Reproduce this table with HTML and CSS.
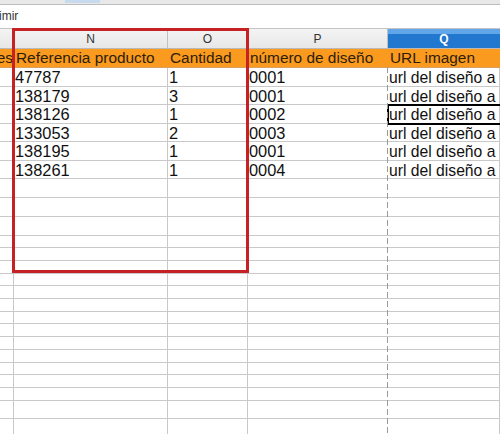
FILE: index.html
```html
<!DOCTYPE html>
<html lang="es">
<head>
<meta charset="utf-8">
<title>Hoja de cálculo</title>
<link rel="stylesheet" href="styles.css">
</head>
<body>
<div class="app">
  <div class="tabs"><span class="tab"></span></div>
  <div class="menubar"><span class="menu-item">imir</span></div>
  <div class="sheet">
    <div class="row hdr">
      <div class="c c0"></div><div class="c">N</div><div class="c">O</div><div class="c">P</div><div class="c sel">Q</div>
    </div>
    <div class="row h19 titles">
      <div class="c c0 tail">es</div><div class="c">Referencia producto</div><div class="c">Cantidad</div><div class="c">número de diseño</div><div class="c">URL imagen</div>
    </div>
    <div class="row h19 data"><div class="c c0"></div><div class="c num">47787</div><div class="c num">1</div><div class="c num pb">0001</div><div class="c url">url del diseño a</div></div>
    <div class="row h18 data"><div class="c c0"></div><div class="c num">138179</div><div class="c num">3</div><div class="c num pb">0001</div><div class="c url">url del diseño a</div></div>
    <div class="row h19 data"><div class="c c0"></div><div class="c num">138126</div><div class="c num">1</div><div class="c num pb">0002</div><div class="c url cursor">url del diseño a</div></div>
    <div class="row h18 data"><div class="c c0"></div><div class="c num">133053</div><div class="c num">2</div><div class="c num pb">0003</div><div class="c url">url del diseño a</div></div>
    <div class="row h19 data"><div class="c c0"></div><div class="c num">138195</div><div class="c num">1</div><div class="c num pb">0001</div><div class="c url">url del diseño a</div></div>
    <div class="row h18 data"><div class="c c0"></div><div class="c num">138261</div><div class="c num">1</div><div class="c num pb">0004</div><div class="c url">url del diseño a</div></div>
    <div class="row h19"><div class="c c0"></div><div class="c"></div><div class="c"></div><div class="c pb"></div><div class="c"></div></div>
    <div class="row h19"><div class="c c0"></div><div class="c"></div><div class="c"></div><div class="c pb"></div><div class="c"></div></div>
    <div class="row h19"><div class="c c0"></div><div class="c"></div><div class="c"></div><div class="c pb"></div><div class="c"></div></div>
    <div class="row h12"><div class="c c0"></div><div class="c"></div><div class="c"></div><div class="c pb"></div><div class="c"></div></div>
    <div class="row h13"><div class="c c0"></div><div class="c"></div><div class="c"></div><div class="c pb"></div><div class="c"></div></div>
    <div class="row h13"><div class="c c0"></div><div class="c"></div><div class="c"></div><div class="c pb"></div><div class="c"></div></div>
    <div class="row h12"><div class="c c0"></div><div class="c"></div><div class="c"></div><div class="c pb"></div><div class="c"></div></div>
    <div class="row h13"><div class="c c0"></div><div class="c"></div><div class="c"></div><div class="c pb"></div><div class="c"></div></div>
    <div class="row h13"><div class="c c0"></div><div class="c"></div><div class="c"></div><div class="c pb"></div><div class="c"></div></div>
    <div class="row h12"><div class="c c0"></div><div class="c"></div><div class="c"></div><div class="c pb"></div><div class="c"></div></div>
    <div class="row h13"><div class="c c0"></div><div class="c"></div><div class="c"></div><div class="c pb"></div><div class="c"></div></div>
    <div class="row h13"><div class="c c0"></div><div class="c"></div><div class="c"></div><div class="c pb"></div><div class="c"></div></div>
    <div class="row h13"><div class="c c0"></div><div class="c"></div><div class="c"></div><div class="c pb"></div><div class="c"></div></div>
    <div class="row h12"><div class="c c0"></div><div class="c"></div><div class="c"></div><div class="c pb"></div><div class="c"></div></div>
    <div class="row h13"><div class="c c0"></div><div class="c"></div><div class="c"></div><div class="c pb"></div><div class="c"></div></div>
    <div class="row h13"><div class="c c0"></div><div class="c"></div><div class="c"></div><div class="c pb"></div><div class="c"></div></div>
    <div class="row h18"><div class="c c0"></div><div class="c"></div><div class="c"></div><div class="c pb"></div><div class="c"></div></div>
    <div class="row h19"><div class="c c0"></div><div class="c"></div><div class="c"></div><div class="c pb"></div><div class="c"></div></div>
    <div class="pagebreak"></div>
    <div class="highlight"></div>
  </div>
</div>
</body>
</html>
```

FILE: styles.css
```css
html, body {
  margin: 0;
  padding: 0;
  background: #ffffff;
  overflow: hidden;
}

.app {
  width: 500px;
  height: 434px;
  overflow: hidden;
  font-family: "Liberation Sans", Arial, sans-serif;
  color: #111;
}

.tabs {
  height: 4px;
  background: #e8e8e8;
  border-bottom: 1px solid #bdbdbd;
  display: flex;
}

.tab {
  margin-left: 65px;
  width: 35px;
  height: 3px;
  background: #c7daee;
}

.menubar {
  height: 23px;
  display: flex;
  align-items: center;
  background: #ffffff;
}

.menu-item {
  font-size: 12px;
  color: #333;
  margin-left: -1px;
  padding-bottom: 1px;
}

.sheet {
  position: relative;
}

.row {
  display: grid;
  grid-template-columns: 14px 154px 80px 140px 112px;
  box-sizing: border-box;
  border-bottom: 1px solid #c9c9c9;
}

.h12 { height: 12px; }
.h13 { height: 13px; }
.h18 { height: 18px; }
.h19 { height: 19px; }

.c {
  box-sizing: border-box;
  border-right: 1px solid #c9c9c9;
  overflow: hidden;
  white-space: nowrap;
  padding: 0 2px;
  line-height: 18px;
}

.c.pb {
  border-right-color: transparent;
}

.hdr {
  height: 21px;
  border-top: 1px solid #c4c4c4;
  border-bottom: 1px solid #b9b9b9;
  background: linear-gradient(#f4f4f4, #e7e7e7);
}

.hdr .c {
  font-size: 12px;
  line-height: 20px;
  text-align: center;
  color: #333;
  border-right-color: #c0c0c0;
}

.hdr .sel {
  background: linear-gradient(#62a6ea 0, #62a6ea 28%, #2277cf 28%, #2277cf 100%);
  color: #ffffff;
  font-weight: bold;
  border-right: none;
}

.titles {
  background: #fa9a1e;
  border-bottom-color: #d9a060;
}

.titles .c {
  font-size: 15.4px;
  color: #2e2008;
  border-right-color: transparent;
}

.titles .tail {
  text-align: right;
  padding: 0;
  direction: rtl;
}

.data .c {
  font-size: 16.4px;
  line-height: 19px;
  padding-left: 1px;
}

.data .url {
  font-size: 15.7px;
}

.cursor {
  position: relative;
  overflow: visible;
}

.cursor::after {
  content: "";
  position: absolute;
  left: -1px;
  top: -1px;
  right: -20px;
  bottom: -1px;
  border: 2px solid #000;
}

.pagebreak {
  position: absolute;
  left: 387px;
  top: 39px;
  bottom: -200px;
  width: 1px;
  background: repeating-linear-gradient(to bottom, #9a9a9a 0, #9a9a9a 6px, transparent 6px, transparent 9px);
}

.highlight {
  position: absolute;
  left: 12px;
  top: 0;
  width: 237px;
  height: 245px;
  box-sizing: border-box;
  border: 3px solid #c62226;
}
```
